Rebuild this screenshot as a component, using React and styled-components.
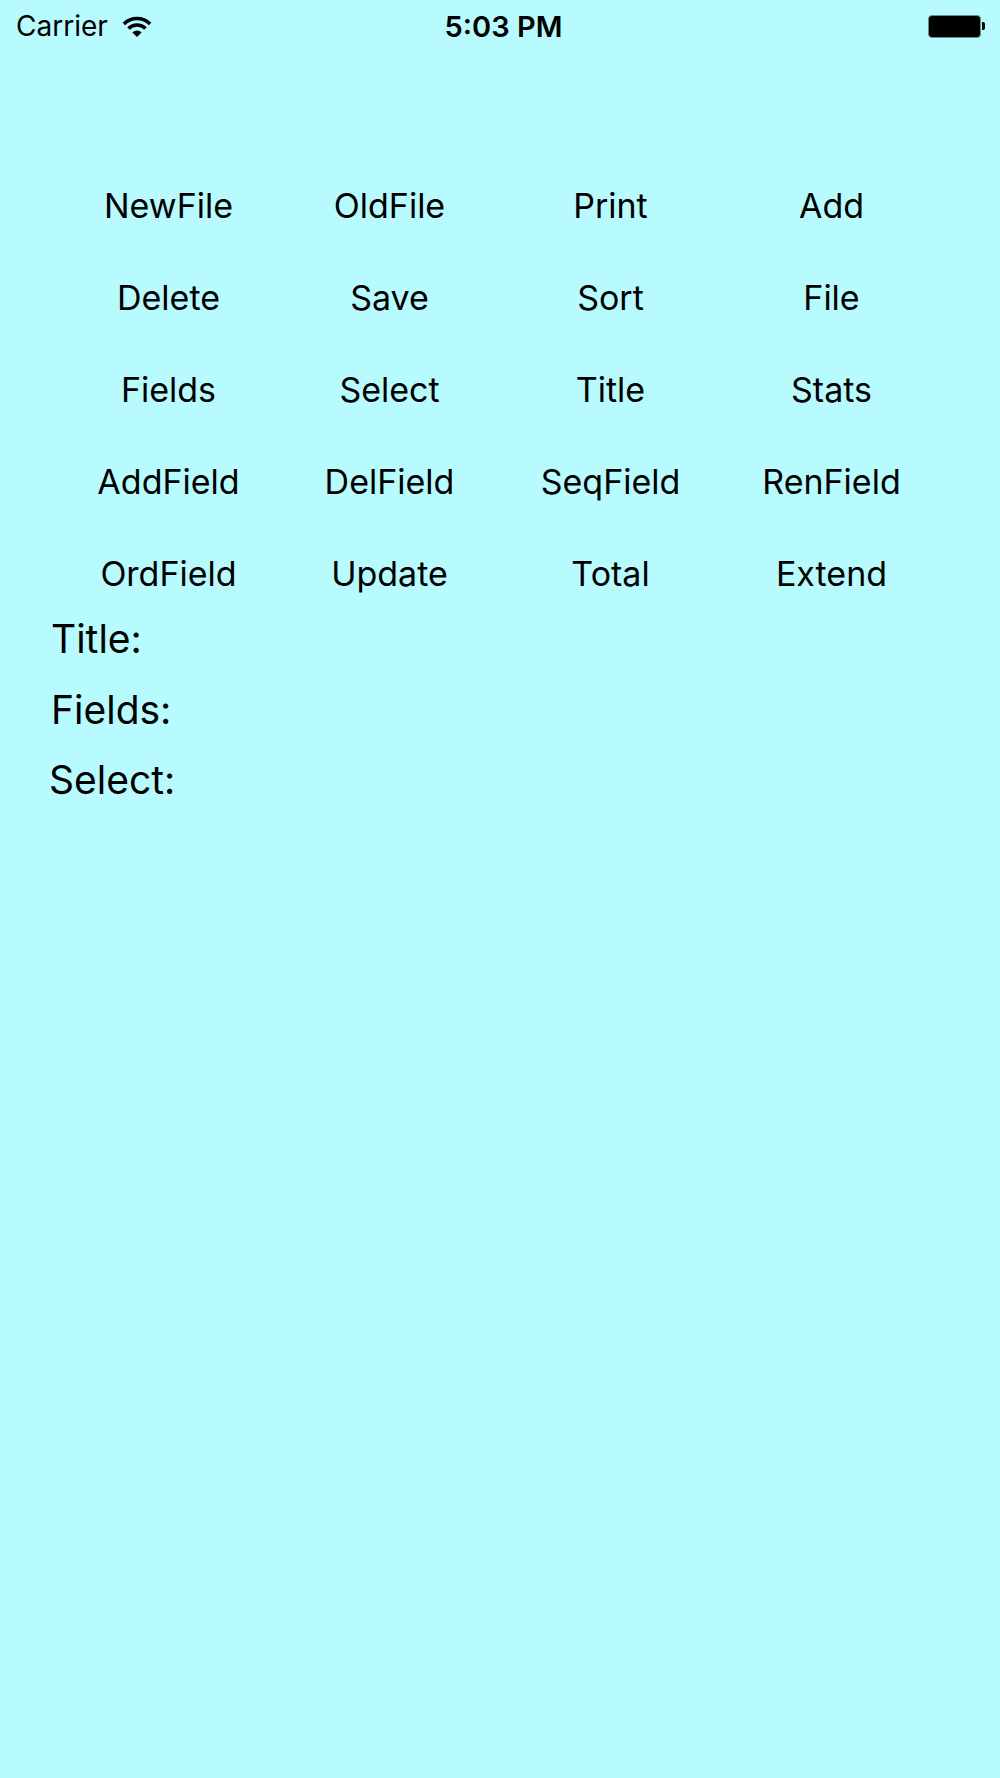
import React from "react";
import styled, { createGlobalStyle } from "styled-components";

const GlobalStyle = createGlobalStyle`
  html, body {
    margin: 0;
    padding: 0;
    background-color: #b7fbff;
  }
  body {
    font-family: Inter, "Liberation Sans", sans-serif;
    color: #000;
  }
`;

const Screen = styled.div`
  width: 1000px;
  min-height: 1778px;
  background-color: #b7fbff;
`;

const StatusBar = styled.div`
  display: grid;
  grid-template-columns: 1fr auto 1fr;
  align-items: center;
  height: 52px;
  padding: 0 15px 0 16px;
  font-size: 28px;
`;

const Carrier = styled.div`
  display: flex;
  align-items: center;
  gap: 14px;
`;

const Clock = styled.div`
  font-weight: 600;
  font-size: 29px;
  padding-left: 6px;
`;

const BatteryWrap = styled.div`
  display: flex;
  align-items: center;
  justify-content: flex-end;
`;

const BatteryBody = styled.div`
  width: 51px;
  height: 21px;
  background: #000;
  border: 1px solid #6a8c8e;
  border-radius: 4px;
`;

const BatteryNub = styled.div`
  width: 3px;
  height: 8px;
  margin-left: 1px;
  background: #000;
  border-radius: 0 2px 2px 0;
`;

const ButtonGrid = styled.div`
  display: grid;
  grid-template-columns: repeat(4, 205px);
  grid-auto-rows: 75px;
  column-gap: 16px;
  row-gap: 17px;
  margin-top: 116px;
  padding-left: 66px;
`;

const Cell = styled.button`
  display: flex;
  align-items: center;
  justify-content: center;
  border: none;
  padding: 0;
  background-color: #b8fbff;
  font-family: Inter, "Liberation Sans", sans-serif;
  font-size: 34px;
  color: #000;
  cursor: pointer;
`;

const Labels = styled.div`
  display: flex;
  flex-direction: column;
  gap: 14.5px;
  padding-left: 51px;
`;

const Label = styled.div`
  font-size: 39px;
  line-height: 56px;
  margin-left: ${(p) => p.$shift || 0}px;
`;

const buttons = [
  "NewFile", "OldFile", "Print", "Add",
  "Delete", "Save", "Sort", "File",
  "Fields", "Select", "Title", "Stats",
  "AddField", "DelField", "SeqField", "RenField",
  "OrdField", "Update", "Total", "Extend",
];

const Wifi = () => (
  <svg width="30" height="23" viewBox="0 0 30 23">
    <path d="M1.92 8.92 A18.5 18.5 0 0 1 28.08 8.92" fill="none" stroke="#000" strokeWidth="3.5" />
    <path d="M6.51 13.51 A12 12 0 0 1 23.49 13.51" fill="none" stroke="#000" strokeWidth="3.5" />
    <path d="M15 22 L10.4 17.4 A6.5 6.5 0 0 1 19.6 17.4 Z" fill="#000" />
  </svg>
);

const App = () => {
  return (
    <Screen>
      <GlobalStyle />
      <StatusBar>
        <Carrier>
          <span>Carrier</span>
          <Wifi />
        </Carrier>
        <Clock>5:03 PM</Clock>
        <BatteryWrap>
          <BatteryBody />
          <BatteryNub />
        </BatteryWrap>
      </StatusBar>
      <ButtonGrid>
        {buttons.map((b) => (
          <Cell key={b} type="button">{b}</Cell>
        ))}
      </ButtonGrid>
      <Labels>
        <Label>Title:</Label>
        <Label>Fields:</Label>
        <Label $shift={-2}>Select:</Label>
      </Labels>
    </Screen>
  );
};

export default App;
